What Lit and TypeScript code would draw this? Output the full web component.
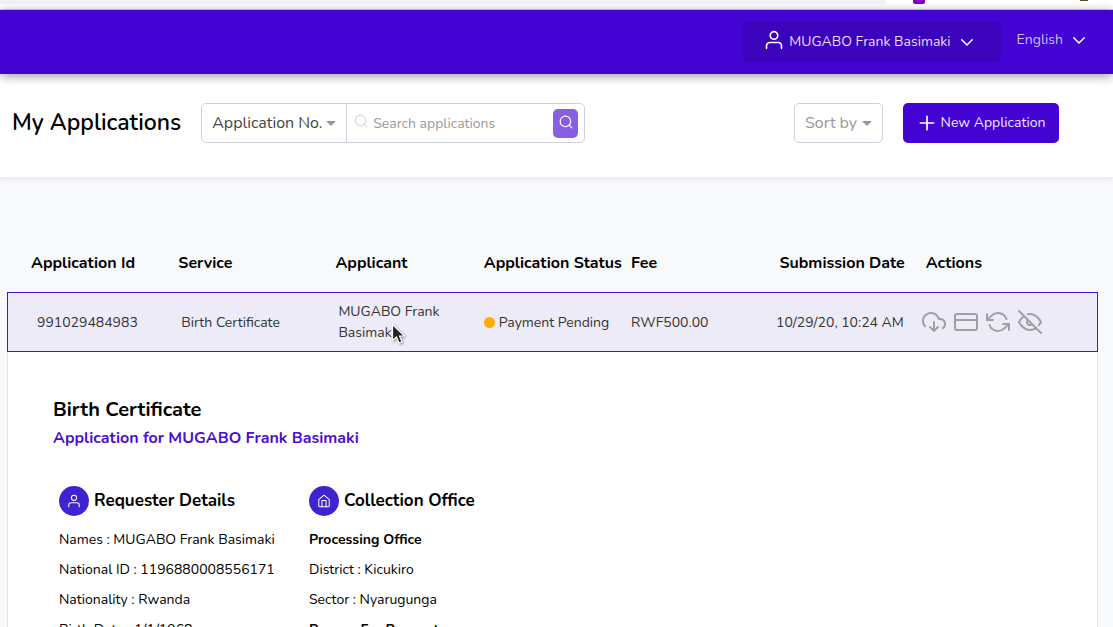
import { LitElement, html, svg, css } from "lit";
import { customElement, property } from "lit/decorators.js";

const glyphs: Record<string, unknown> = {
  user: svg`<circle cx="12" cy="6.500" r="4.500"/><path d="M3 22v-3a4 4 0 0 1 4-4h10a4 4 0 0 1 4 4v3"/>`,
  chevron: svg`<path d="M5 9l7 7 7-7"/>`,
  search: svg`<circle cx="11" cy="11" r="9"/><path d="M22 22l-4.600-4.600"/>`,
  plus: svg`<path d="M12 4v16M4 12h16"/>`,
  download: svg`<path d="M8 17l4 4 4-4M12 12v9"/><path d="M20.880 18.090A5 5 0 0 0 18 9h-1.260A8 8 0 1 0 3 16.290"/>`,
  card: svg`<rect x="1" y="4" width="22" height="16" rx="2"/><path d="M1 10h22"/>`,
  refresh: svg`<path d="M1 4v6h6M23 20v-6h-6"/><path d="M20.490 9A9 9 0 0 0 5.640 5.640L1 10m22 4l-4.640 4.360A9 9 0 0 1 3.510 15"/>`,
  hide: svg`<path d="M17.940 17.940A10.070 10.070 0 0 1 12 20c-7 0-11-8-11-8a18.450 18.450 0 0 1 5.060-5.940M9.900 4.240A9.120 9.120 0 0 1 12 4c7 0 11 8 11 8a18.500 18.500 0 0 1-2.160 3.190m-6.720-1.070a3 3 0 1 1-4.240-4.240M1 1l22 22"/>`,
  home: svg`<path d="M3 9.500l9-7.500 9 7.500V20a2 2 0 0 1-2 2H5a2 2 0 0 1-2-2z"/><path d="M8.500 22V11h7v11"/>`,
};

@customElement("ui-icon")
class UiIcon extends LitElement {
  @property() name = "user";
  static styles = css`
    :host { display: inline-flex; width: 24px; height: 24px; flex: none; }
    .glyph {
      width: 100%; height: 100%; fill: none; stroke: currentColor;
      stroke-width: var(--stroke, 2); stroke-linecap: round; stroke-linejoin: round;
    }
  `;
  render() {
    return html`<svg class="glyph" viewBox="0 0 24 24" aria-hidden="true">${glyphs[this.name]}</svg>`;
  }
}

const actions = [
  { icon: "download", label: "Download" },
  { icon: "card", label: "Pay" },
  { icon: "refresh", label: "Refresh" },
  { icon: "hide", label: "Hide details" },
];

const sections = [
  {
    icon: "user",
    title: "Requester Details",
    lines: [
      { text: "Names : MUGABO Frank Basimaki" },
      { text: "National ID : 1196880008556171" },
      { text: "Nationality : Rwanda" },
      { text: "Birth Date : 1/1/1968" },
    ],
  },
  {
    icon: "home",
    title: "Collection Office",
    lines: [
      { text: "Processing Office", strong: true },
      { text: "District : Kicukiro" },
      { text: "Sector : Nyarugunga" },
      { text: "Reason For Request", strong: true },
    ],
  },
];

@customElement("app-root")
class AppRoot extends LitElement {
  static styles = css`
    :host {
      display: block; height: 100vh; overflow: hidden; position: relative;
      background: #f8f9fb; color: #000;
      font: 14px/20px Nunito, Lato, "Noto Sans", sans-serif;
    }
    * { box-sizing: border-box; }
    button, select, input { font: inherit; color: inherit; margin: 0; }
    button { border: 0; padding: 0; background: none; cursor: pointer; }

    .chrome {
      display: flex; align-items: flex-start; height: 10px;
      background: #fff; border-bottom: 1px solid #d3d3dc;
    }
    .omnibox { flex: 1; height: 4px; background: #f1f3f4; border-radius: 0 0 12px 0; }
    .extension { width: 12px; height: 4px; margin-left: 27px; background: #8400c0; border-radius: 0 0 2px 2px; }
    .avatar { width: 8px; height: 1px; margin: 0 25px 0 155px; background: #5d4a2c; }

    .topbar {
      display: flex; align-items: center; justify-content: flex-end; gap: 16px;
      height: 64px; padding-right: 25px; position: relative; z-index: 2;
      background: #4203d3; color: #e6defa; box-shadow: 0 2px 10px rgba(0, 0, 0, 0.4);
    }
    .account {
      display: flex; align-items: center; height: 40px; padding: 0 25px 0 21px;
      background: #3c03bd; border-radius: 4px;
    }
    .account-icon { width: 20px; height: 20px; margin: 0 5px 4px 0; color: #fff; }
    .chevron { width: 18px; height: 18px; margin-left: 7px; color: #fff; }
    .language { display: flex; align-items: center; height: 44px; align-self: flex-start; padding-top: 16px; color: #cdbdf3; }

    .toolbar {
      display: flex; align-items: center; height: 104px; padding: 0 54px 5px 12px;
      background: #fff; border-bottom: 1px solid #eceef6; box-shadow: 0 2px 5px rgba(40, 40, 80, 0.08);
    }
    .title { margin: 0 20px 0 0; font-size: 23px; line-height: 32px; font-weight: 600; white-space: nowrap; }
    .search {
      display: flex; align-items: center; width: 384px; height: 40px;
      border: 1px solid #ced1de; border-radius: 5px; padding-right: 6px;
    }
    .picker { position: relative; display: flex; align-items: center; height: 38px; }
    .picker::after {
      content: ""; position: absolute; right: 10px; top: 17px; pointer-events: none;
      border: 5px solid transparent; border-top-color: #999; border-bottom: 0;
    }
    .select {
      appearance: none; border: 0; background: none; outline: 0;
      width: 100%; height: 100%; padding: 0 20px 0 10px; font-size: 16px;
    }
    .field { width: 145px; border-right: 1px solid #ced1de; color: #444; flex: none; }
    .hint-icon { width: 14px; height: 14px; margin: 0 5px 4px 7px; color: #d5d8e4; }
    .query { flex: 1; min-width: 0; border: 0; outline: 0; background: none; height: 36px; padding: 0; }
    .query::placeholder { color: #999; opacity: 1; }
    .go {
      display: flex; align-items: center; justify-content: center; width: 25px; height: 29px;
      border-radius: 5px; background: #875fe0; color: #fff; padding-bottom: 2px;
    }
    .go-icon { width: 14px; height: 14px; }
    .sort { width: 89px; height: 40px; margin-left: auto; border: 1px solid #ced1de; border-radius: 5px; color: #999; }
    .create {
      display: flex; align-items: center; justify-content: center; gap: 4px;
      width: 156px; height: 40px; margin-left: 20px; border-radius: 5px;
      background: #4203d3; color: #f0eafc; white-space: nowrap;
    }
    .create-icon { width: 20px; height: 20px; --stroke: 2; color: #fff; }

    .content { padding: 56px 15px 0 7px; }
    .applications { width: 100%; table-layout: fixed; border-collapse: separate; border-spacing: 0; }
    .c1 { width: 13.5%; } .c2 { width: 14.4%; } .c3 { width: 13.6%; } .c4 { width: 13.5%; }
    .c5 { width: 13.6%; } .c6 { width: 13.6%; }
    .head {
      height: 58px; padding: 0 0 0 24px; text-align: left; white-space: nowrap;
      font-size: 16px; font-weight: 700;
    }
    .head-actions { padding-left: 22px; }
    .selected { background: #eeebf8; outline: 1px solid #4a14c8; outline-offset: -1px; color: #333; }
    .cell { height: 60px; padding: 0 0 0 27px; line-height: 21px; }
    .cell-id { padding-left: 30px; }
    .cell-tight { padding-left: 24px; white-space: nowrap; }
    .date { padding: 0; text-align: right; white-space: nowrap; }
    .status { display: flex; align-items: center; gap: 4px; }
    .dot { width: 11px; height: 11px; flex: none; border-radius: 50%; background: #ffae00; }
    .cell-actions { padding-left: 18px; }
    .actions { display: flex; gap: 8px; color: #a0a0a0; }
    .action { display: flex; }

    .panel { padding: 0; background: #fff; border: 1px solid #e4e5ea; border-width: 0 1px; }
    .details { padding: 44px 45px 40px; }
    .service { margin: 0; font-size: 20px; line-height: 28px; font-weight: 700; }
    .for { margin: 0; font-size: 16px; line-height: 28px; font-weight: 700; color: #4a0fd0; }
    .sections { display: flex; padding: 34px 6px 0; }
    .section { width: 250px; }
    .section-title {
      display: flex; align-items: center; gap: 5px; margin: 0 0 9px;
      font-size: 17px; line-height: 30px; font-weight: 700; white-space: nowrap;
    }
    .badge {
      display: flex; align-items: center; justify-content: center; width: 30px; height: 30px;
      border-radius: 50%; background: #4122d0; color: #fff;
    }
    .badge-icon { width: 14px; height: 14px; --stroke: 1.75; }
    .line { margin: 0; line-height: 30px; white-space: nowrap; }
    .strong { font-weight: 700; }

    .pointer { position: absolute; left: 391px; top: 323px; width: 14px; height: 22px; z-index: 3; filter: drop-shadow(1px 1px 1px rgba(0, 0, 0, 0.4)); }
  `;

  render() {
    return html`
      <div class="chrome"><div class="omnibox"></div><div class="extension"></div><div class="avatar"></div></div>
      <header class="topbar">
        <button class="account">
          <ui-icon class="account-icon" name="user"></ui-icon>
          <span>MUGABO Frank Basimaki</span>
          <ui-icon class="chevron" name="chevron"></ui-icon>
        </button>
        <button class="language">
          <span>English</span><ui-icon class="chevron" name="chevron"></ui-icon>
        </button>
      </header>
      <section class="toolbar">
        <h1 class="title">My Applications</h1>
        <form class="search" @submit=${(e: Event) => e.preventDefault()}>
          <div class="picker field">
            <select class="select" aria-label="Search field"><option>Application No.</option></select>
          </div>
          <ui-icon class="hint-icon" name="search"></ui-icon>
          <input class="query" type="text" aria-label="Search applications" placeholder="Search applications" />
          <button class="go" aria-label="Search"><ui-icon class="go-icon" name="search"></ui-icon></button>
        </form>
        <div class="picker sort">
          <select class="select" aria-label="Sort by"><option>Sort by</option></select>
        </div>
        <button class="create"><ui-icon class="create-icon" name="plus"></ui-icon><span>New Application</span></button>
      </section>
      <main class="content">
        <table class="applications">
          <colgroup>
            <col class="c1" /><col class="c2" /><col class="c3" /><col class="c4" /><col class="c5" /><col class="c6" /><col />
          </colgroup>
          <thead>
            <tr>
              ${["Application Id", "Service", "Applicant", "Application Status", "Fee", "Submission Date"].map(
                (label) => html`<th class="head" scope="col">${label}</th>`
              )}
              <th class="head head-actions" scope="col">Actions</th>
            </tr>
          </thead>
          <tbody>
            <tr class="selected">
              <td class="cell cell-id">991029484983</td>
              <td class="cell">Birth Certificate</td>
              <td class="cell">MUGABO Frank Basimaki</td>
              <td class="cell cell-tight"><span class="status"><span class="dot"></span>Payment Pending</span></td>
              <td class="cell cell-tight">RWF500.00</td>
              <td class="cell date">10/29/20, 10:24 AM</td>
              <td class="cell cell-actions">
                <div class="actions">
                  ${actions.map(
                    (a) => html`<button class="action" aria-label=${a.label}><ui-icon name=${a.icon}></ui-icon></button>`
                  )}
                </div>
              </td>
            </tr>
            <tr>
              <td class="panel" colspan="7">
                <div class="details">
                  <h2 class="service">Birth Certificate</h2>
                  <p class="for">Application for MUGABO Frank Basimaki</p>
                  <div class="sections">
                    ${sections.map(
                      (s) => html`
                        <section class="section">
                          <h3 class="section-title">
                            <span class="badge"><ui-icon class="badge-icon" name=${s.icon}></ui-icon></span>${s.title}
                          </h3>
                          ${s.lines.map((l) => html`<p class="line ${l.strong ? "strong" : ""}">${l.text}</p>`)}
                        </section>
                      `
                    )}
                  </div>
                </div>
              </td>
            </tr>
          </tbody>
        </table>
      </main>
      <svg class="pointer" viewBox="0 0 14 22" aria-hidden="true">
        <path d="M1.500 1.500v16l4-3.500 2.500 6 3-1.200-2.500-5.800h5z" fill="#222" stroke="#fff" stroke-width="1.200"/>
      </svg>
    `;
  }
}
